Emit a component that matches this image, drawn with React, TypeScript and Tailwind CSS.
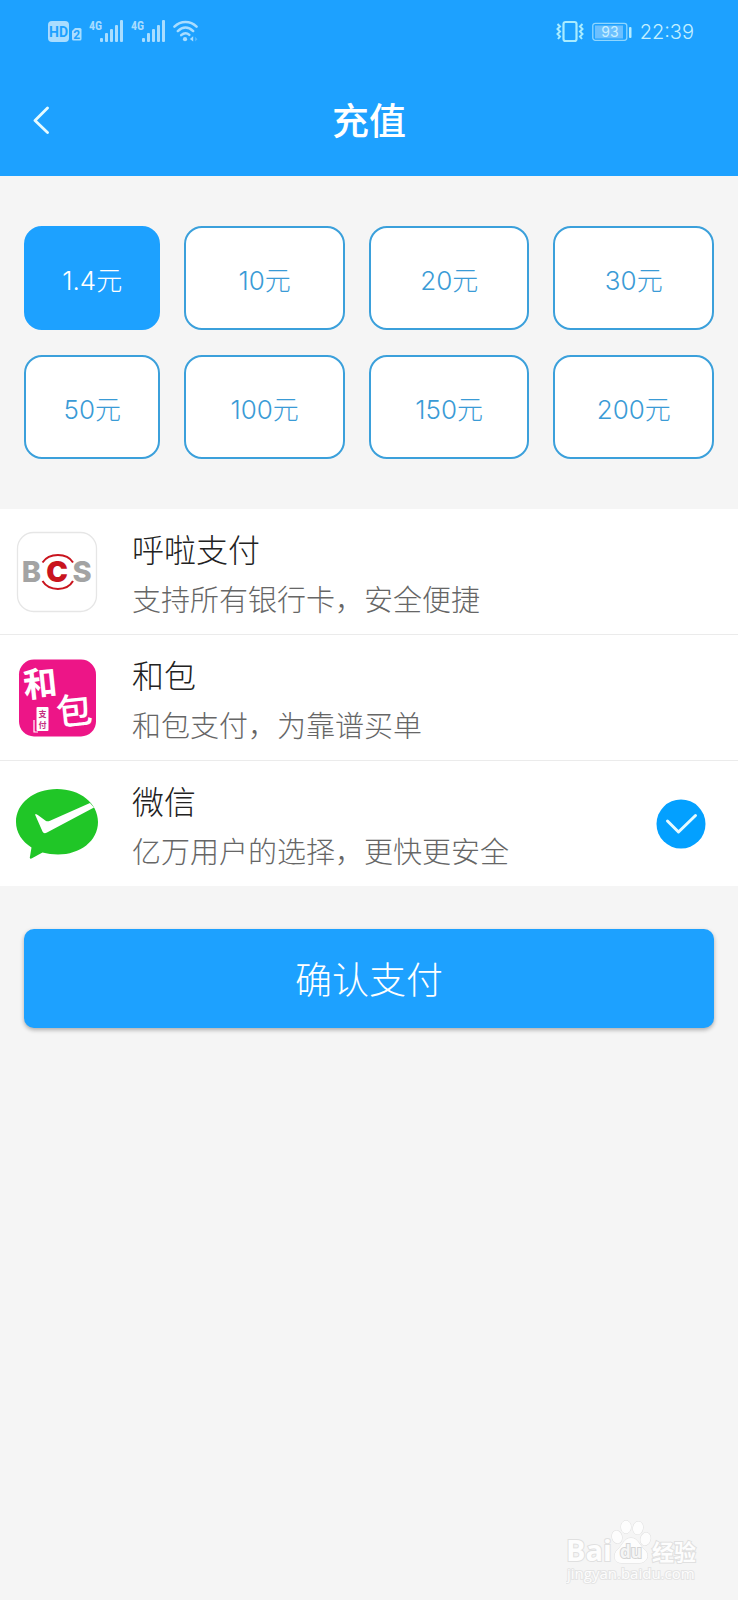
import { useState } from "react";

const amounts = ["1.4", "10", "20", "30", "50", "100", "150", "200"];

function HdIcon() {
  return (
    <svg width="34" height="24" viewBox="0 0 34 24" aria-hidden="true">
      <rect x="0" y="1" width="21" height="21" rx="4" fill="#a9ddff" />
      <text x="10.5" y="16.5" textAnchor="middle" fontSize="14" fontWeight="700" fontFamily="Roboto, sans-serif" fill="#1da1ff">
        HD
      </text>
      <path d="M24 11 L27 8 H32 a1.5 1.5 0 0 1 1.5 1.5 V19 a1.5 1.5 0 0 1 -1.5 1.5 H25.500 a1.500 1.500 0 0 1 -1.500 -1.500 Z" fill="#a9ddff" />
      <text x="28.800" y="18.500" textAnchor="middle" fontSize="12" fontWeight="700" fontFamily="Roboto, sans-serif" fill="#1da1ff">
        2
      </text>
    </svg>
  );
}

function SignalIcon() {
  return (
    <svg width="35" height="24" viewBox="0 0 35 24" aria-hidden="true" fill="#a9ddff">
      <text x="0" y="10" fontSize="12" fontWeight="700" fontFamily="'Roboto Condensed', Roboto, sans-serif">
        4G
      </text>
      <rect x="11" y="18" width="3" height="4" rx="1" />
      <rect x="16" y="13" width="3" height="9" rx="1" />
      <rect x="21" y="9" width="3" height="13" rx="1" />
      <rect x="26" y="5" width="3" height="17" rx="1" />
      <rect x="31" y="0" width="3" height="22" rx="1" />
    </svg>
  );
}

function WifiIcon() {
  return (
    <svg width="25" height="24" viewBox="0 0 26 24" aria-hidden="true" fill="none" stroke="#a9ddff" strokeWidth="2.600" strokeLinecap="round">
      <path d="M1.500 6.500 C8 0 18 0 24.500 6.500" />
      <path d="M5 11 C10 6.200 16 6.200 21 11" />
      <path d="M8.500 15.300 C11.500 12.700 14.500 12.700 17 15" />
      <circle cx="12.500" cy="19.500" r="2.200" fill="#a9ddff" stroke="none" />
      <path d="M21 16.500 V22 L17.500 19.200 Z" fill="#a9ddff" stroke="none" />
      <path d="M23 17 V22 L25.500 19.500 Z" fill="#a9ddff" fillOpacity="0.4" stroke="none" />
    </svg>
  );
}

function VibrateIcon() {
  return (
    <svg width="28" height="24" viewBox="0 0 28 24" aria-hidden="true" fill="none" stroke="#a9ecff">
      <rect x="7.500" y="2" width="13" height="19" rx="2" strokeWidth="2.200" />
      <path d="M1.500 4 L4 6.500 L1.500 9 L4 11.500 L1.500 14 L4 16.500 L2 19" strokeWidth="2" />
      <path d="M26.500 4 L24 6.500 L26.500 9 L24 11.500 L26.500 14 L24 16.500 L26 19" strokeWidth="2" />
    </svg>
  );
}

function BatteryIcon() {
  return (
    <svg width="40" height="20" viewBox="0 0 40 20" role="img" aria-label="93%">
      <rect x="0.800" y="1.300" width="34" height="17" rx="2.500" fill="none" stroke="#8fd6ff" strokeWidth="1.300" />
      <rect x="3" y="3.500" width="28" height="13" fill="#6cc0ff" />
      <text x="18" y="14.500" textAnchor="middle" fontSize="14" fontFamily="Inter, sans-serif" fill="#c9efff">
        93
      </text>
      <rect x="37" y="5" width="2.500" height="11" rx="1" fill="#b5ecff" />
    </svg>
  );
}

function BcsLogo() {
  return (
    <svg width="82" height="82" viewBox="0 0 82 82" aria-hidden="true">
      <rect x="1.500" y="1.500" width="79" height="79" rx="16" fill="#fff" stroke="#e6e6e6" strokeWidth="1.300" />
      <g fontFamily="Inter, sans-serif" textAnchor="middle">
        <text x="15.500" y="50.500" fontSize="29" fontWeight="800" fill="#a3a3a3">B</text>
        <text x="41" y="51" fontSize="29" fontWeight="900" fill="#c9141e">C</text>
        <text x="66" y="50.500" fontSize="29" fontWeight="800" fill="#a3a3a3">S</text>
      </g>
      <path d="M26.500 31.500 C33 21.500 51 21.500 57 31.500" fill="none" stroke="#c9141e" strokeWidth="2" />
      <path d="M26.500 50 C33 60.500 51 60.500 57 50" fill="none" stroke="#c9141e" strokeWidth="2" />
    </svg>
  );
}

function HebaoLogo() {
  return (
    <svg width="82" height="82" viewBox="0 0 82 82" aria-hidden="true">
      <rect x="3" y="2.500" width="77" height="77" rx="15" fill="#ed1587" />
      <g fontFamily="'Noto Sans CJK SC', sans-serif" textAnchor="middle" fill="#fff">
        <text x="24" y="39" fontSize="34" fontWeight="700" transform="rotate(-6 24 26)">和</text>
        <text x="58" y="67" fontSize="36" fontWeight="500" transform="rotate(-6 58 53)">包</text>
        <path d="M18 63 V75 H22" fill="none" stroke="#fff" strokeWidth="1.200" />
        <rect x="20.500" y="50" width="12" height="24" rx="1" />
        <text x="26.500" y="60" fontSize="8" fontWeight="700" fill="#c4307f">支</text>
        <text x="26.500" y="71" fontSize="8" fontWeight="700" fill="#c4307f">付</text>
      </g>
    </svg>
  );
}

function WechatLogo() {
  return (
    <svg width="82" height="82" viewBox="0 0 82 82" aria-hidden="true">
      <path
        d="M41 6 C64 6 82 20 82 39 C82 58 64 71.500 42 71.500 C37 71.500 31 70.500 26.500 69.500 L15.500 75.500 C13.800 76 13.500 75 14 73.500 L15.500 64.500 C6 58.500 0 49.500 0 39 C0 20 18 6 41 6 Z"
        fill="#20c627"
      />
      <path d="M19 31.500 C19.800 30.700 21.500 31.500 22.500 32.500 L30 38 C31 38.500 32.500 38.500 34 37.800 L74 20 L78 24.500 L31 49.500 C29 50.500 27.500 50.500 26.500 48.500 Z" fill="#fff" />
    </svg>
  );
}

function CheckedMark() {
  return (
    <svg width="50" height="50" viewBox="0 0 50 50" aria-hidden="true">
      <circle cx="25" cy="25" r="24.500" fill="#03a0ff" />
      <path d="M11.500 22 L22.500 33 L39.500 16.500" fill="none" stroke="#e6fbff" strokeWidth="3" strokeLinecap="round" strokeLinejoin="round" />
    </svg>
  );
}

function Watermark() {
  return (
    <svg width="136" height="68" viewBox="0 0 136 68" aria-label="Baidu 经验" role="img">
      <g fill="#fdfdfd" stroke="#e0e0e0" strokeWidth="1" paintOrder="stroke">
        <text x="0" y="43" fontSize="29" fontWeight="700" fontFamily="'Open Sans', sans-serif" strokeWidth="2">Bai</text>
        <ellipse cx="51" cy="19" rx="5" ry="6.500" transform="rotate(-15 51 19)" />
        <ellipse cx="60" cy="9" rx="5" ry="6.500" />
        <ellipse cx="72" cy="10" rx="5" ry="6.500" transform="rotate(10 72 10)" />
        <ellipse cx="79.500" cy="21" rx="5" ry="6.500" transform="rotate(15 79.500 21)" />
        <path d="M65 20 C72 20 73 27 79 32 C84 37 81 45 73 45 H56 C48 45 46 37 52 31 C57 27 58 20 65 20 Z" />
        <text x="65" y="40" textAnchor="middle" fontSize="17" fontWeight="700" fontFamily="'Open Sans', sans-serif" fill="#f5f5f5" stroke="#d4d4d4" strokeWidth="2">du</text>
        <text x="86" y="42" fontSize="22" fontWeight="700" fontFamily="'Noto Sans CJK SC', sans-serif" strokeWidth="2">经验</text>
        <text x="1" y="61" fontSize="15" fontFamily="'Open Sans', sans-serif" stroke="#e4e4e4" strokeWidth="2">jingyan.baidu.com</text>
      </g>
    </svg>
  );
}

const methods = [
  { id: "hula", name: "呼啦支付", note: "支持所有银行卡，安全便捷", Logo: BcsLogo },
  { id: "hebao", name: "和包", note: "和包支付，为靠谱买单", Logo: HebaoLogo },
  { id: "wechat", name: "微信", note: "亿万用户的选择，更快更安全", Logo: WechatLogo },
];

export default function App() {
  const [amount, setAmount] = useState("1.4");
  const [method, setMethod] = useState("wechat");

  return (
    <div className="relative flex min-h-screen flex-col bg-[#f5f5f5] font-['Inter','Noto_Sans_CJK_SC',sans-serif]">
      <header className="bg-[#1da1ff] text-white">
        <div className="flex h-16 items-center justify-between pr-11 pl-12">
          <div className="flex items-center gap-[7px]">
            <HdIcon />
            <SignalIcon />
            <SignalIcon />
            <WifiIcon />
          </div>
          <div className="flex items-center gap-2">
            <VibrateIcon />
            <BatteryIcon />
            <time className="text-[20px] leading-6 font-light text-[#c4f0ff]">22:39</time>
          </div>
        </div>
        <div className="grid h-28 grid-cols-[80px_1fr_80px] items-center">
          <button type="button" aria-label="返回" className="flex h-20 items-center pl-8">
            <svg width="18" height="28" viewBox="0 0 18 28" fill="none" stroke="#e6fbff" strokeWidth="2.800" strokeLinecap="round" strokeLinejoin="round">
              <path d="M15.500 2 L3 14.500 L15.500 26.500" />
            </svg>
          </button>
          <h1 className="pt-1 text-center text-[37px] leading-[48px] font-medium">充值</h1>
        </div>
      </header>

      <main>
        <section aria-label="充值金额" className="grid grid-cols-[136fr_160fr_160fr_160fr] gap-x-6 gap-y-[25px] px-6 py-[50px]">
          {amounts.map((value) => (
            <button
              key={value}
              type="button"
              aria-pressed={value === amount}
              onClick={() => setAmount(value)}
              className={`h-[104px] rounded-[18px] border-2 pt-1 text-[26px] font-light ${
                value === amount ? "border-[#1da1ff] bg-[#1da1ff] text-white" : "border-[#3ba0db] bg-white text-[#3a9bd6]"
              }`}
            >
              {value}元
            </button>
          ))}
        </section>

        <section aria-label="支付方式" className="divide-y divide-[#ebebeb] bg-white">
          {methods.map(({ id, name, note, Logo }) => (
            <label key={id} htmlFor={id} className="flex items-center pr-8 pl-4">
              <Logo />
              <span className="ml-[34px] flex flex-1 flex-col pt-[17px] pb-2">
                <span className="text-[32px] leading-[50px] font-light text-[#222222]">{name}</span>
                <span className="text-[29px] leading-[50px] font-light text-[#666666]">{note}</span>
              </span>
              <input
                id={id}
                type="radio"
                name="method"
                value={id}
                checked={method === id}
                onChange={() => setMethod(id)}
                className="sr-only"
              />
              {method === id && <CheckedMark />}
            </label>
          ))}
        </section>

        <div className="px-6 pt-[43px]">
          <button
            type="button"
            className="h-[99px] w-full rounded-[10px] bg-[#1da1ff] pt-1 text-[37px] font-light text-white shadow-[0_2px_4px_rgba(0,0,0,0.3)]"
          >
            确认支付
          </button>
        </div>
      </main>

      <div className="pointer-events-none absolute right-9 bottom-3.5">
        <Watermark />
      </div>
    </div>
  );
}
